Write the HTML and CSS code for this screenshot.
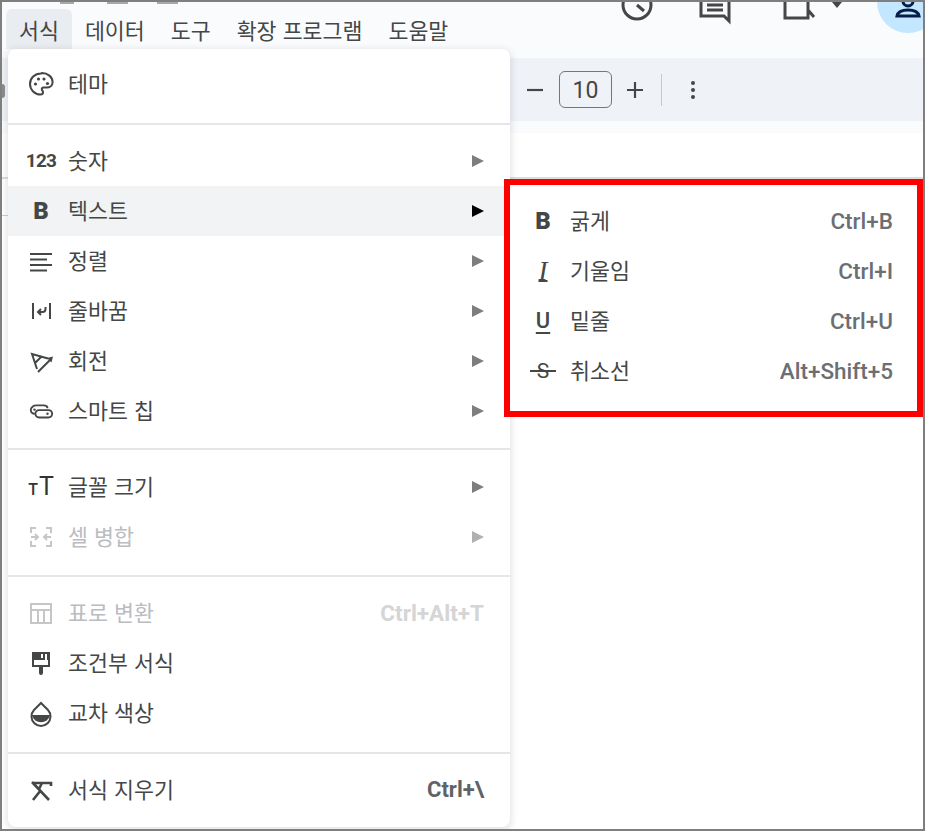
FILE: index.html
```html
<!DOCTYPE html>
<html lang="ko">
<head>
<meta charset="utf-8">
<title>서식 메뉴</title>
<link rel="stylesheet" href="styles.css">
</head>
<body>
<div class="frame">
  <header class="chrome">
    <div class="top-icons">
      <div class="crumbs"><i class="c1"></i><i class="c2"></i><i class="c3"></i></div>
      <svg class="ti ti-clock" viewBox="0 0 36 20"><circle cx="18" cy="3" r="14" /><path d="M18 3l7 6" /></svg>
      <svg class="ti ti-comment" viewBox="0 0 36 22"><path d="M4 0v14h23l5 5V0M10 3h16M10 8h16" /></svg>
      <svg class="ti ti-video" viewBox="0 0 36 20"><path d="M3 0v16h23V0M26 8l6 7" /></svg>
      <svg class="ti ti-chev" viewBox="0 0 12 8"><path class="fill" d="M1 0h10L6 6z" /></svg>
      <div class="avatar"><svg class="ti-person" viewBox="0 0 28 20"><circle cx="14" cy="-1" r="5" /><path d="M3 14c1-5 7-6 11-6s10 1 11 6z" /></svg></div>
    </div>
    <nav class="menubar">
      <span class="mb mb-on">서식</span>
      <span class="mb">데이터</span>
      <span class="mb">도구</span>
      <span class="mb">확장 프로그램</span>
      <span class="mb">도움말</span>
    </nav>
    <div class="toolbar">
      <svg class="tb-ic" viewBox="0 0 20 20"><path d="M2 10h16" /></svg>
      <div class="size">10</div>
      <svg class="tb-ic" viewBox="0 0 20 20"><path d="M2 10h16M10 2v16" /></svg>
      <i class="tb-div"></i>
      <svg class="tb-dots" viewBox="0 0 6 20"><circle cx="3" cy="3" r="2" /><circle cx="3" cy="10" r="2" /><circle cx="3" cy="17" r="2" /></svg>
    </div>
    <div class="strip"></div>
  </header>
  <div class="sheet">
    <div class="ruler"><i></i><i></i><i></i></div>
  </div>

  <i class="edge-blob"></i>
  <i class="edge-tick"></i>

  <div class="menu">
    <div class="item"><span class="ic"><svg viewBox="0 0 26 26"><path class="ln" d="M13 2.500C6.800 2.500 2 7.200 2 13s4.800 10.500 10.500 10.500c1.700 0 2.500-1 2.500-2.200 0-1.500-1.200-1.700-1.200-3 0-1 .8-1.700 1.800-1.700h3c3.600 0 6-2.400 6-5.600 0-5-5-9-10.600-9z"/><circle cx="7.500" cy="13" r="1.600"/><circle cx="10.500" cy="8" r="1.600"/><circle cx="16" cy="8" r="1.600"/><circle cx="19.500" cy="12.500" r="1.600"/></svg></span><span class="lb">테마</span></div>
    <hr class="sep sep-a">
    <div class="item"><span class="ic ic-t t123">123</span><span class="lb">숫자</span><b class="ar"></b></div>
    <div class="item on"><span class="ic ic-t tb">B</span><span class="lb">텍스트</span><b class="ar"></b></div>
    <div class="item"><span class="ic"><svg viewBox="0 0 26 26"><path class="ln" d="M2 6h22M2 11.500h17M2 17h22M2 22.500h17"/></svg></span><span class="lb">정렬</span><b class="ar"></b></div>
    <div class="item"><span class="ic"><svg viewBox="0 0 26 26"><path class="ln" d="M5 5v16M22 5v16M17.500 9v2c0 2-1 3-3 3H10M13 11l-3 3 3 3"/></svg></span><span class="lb">줄바꿈</span><b class="ar"></b></div>
    <div class="item"><span class="ic"><svg viewBox="0 0 26 26"><path class="ln" d="M20 10.500L4 6l5 15M7 15l7-7M10 24L22 12"/><path class="solid" d="M25 8.500l-1.500 6-4.500-4.500z"/></svg></span><span class="lb">회전</span><b class="ar"></b></div>
    <div class="item"><span class="ic"><svg viewBox="0 0 28 26"><path class="ln" d="M9 7h8c2.500 0 4 1.500 4 3M9 7c-3 0-6 2-6 5 0 2.500 2 4 4 4M12 12h10c2.500 0 4 2 4 4s-1.500 4-4 4H12c-2.500 0-4-2-4-4s1.500-4 4-4z"/><circle cx="7" cy="11.500" r="1.300"/><circle cx="21" cy="16" r="1.300"/></svg></span><span class="lb">스마트 칩</span><b class="ar"></b></div>
    <hr class="sep sep-b">
    <div class="item"><span class="ic ic-t ttt"><small>T</small>T</span><span class="lb">글꼴 크기</span><b class="ar"></b></div>
    <div class="item off"><span class="ic"><svg viewBox="0 0 26 26"><path class="ln" d="M8 4H3v5M18 4h5v5M8 22H3v-5M18 22h5v-5M3 13h7M7 10l3 3-3 3M23 13h-7M19 10l-3 3 3 3"/></svg></span><span class="lb">셀 병합</span><b class="ar"></b></div>
    <hr class="sep sep-c">
    <div class="item off"><span class="ic"><svg viewBox="0 0 26 26"><path class="ln" d="M3 4h20v19H3zM3 10h20M10 10v13M16 10v13"/></svg></span><span class="lb">표로 변환</span><span class="sc">Ctrl+Alt+T</span></div>
    <div class="item"><span class="ic"><svg viewBox="0 0 26 26"><path class="ln" d="M5 3h16v13H5z"/><path class="solid" d="M5 3h16v7H5zM11 16h4v7a2 2 0 0 1-4 0z"/><path class="cut" d="M14 4v4M18 4v6"/></svg></span><span class="lb">조건부 서식</span></div>
    <div class="item"><span class="ic"><svg viewBox="0 0 26 26"><path class="ln" d="M13 3l7 7a9.500 9.500 0 1 1-14 0z"/><path class="solid" d="M3.800 15h18.400A9.500 9.500 0 0 1 3.800 15z"/></svg></span><span class="lb">교차 색상</span></div>
    <hr class="sep sep-d">
    <div class="item"><span class="ic"><svg viewBox="0 0 26 26"><path class="ln thick" d="M6 6h17v3M14 6l-3 6M4 5l17 18M5 23l8-10"/></svg></span><span class="lb">서식 지우기</span><span class="sc sc-strong">Ctrl+\</span></div>
  </div>

  <div class="sub">
    <div class="sitem"><span class="sic tb">B</span><span class="lb">굵게</span><span class="sc">Ctrl+B</span></div>
    <div class="sitem"><span class="sic ti-i">I</span><span class="lb">기울임</span><span class="sc">Ctrl+I</span></div>
    <div class="sitem"><span class="sic ti-u">U</span><span class="lb">밑줄</span><span class="sc">Ctrl+U</span></div>
    <div class="sitem"><span class="sic ti-s">S</span><span class="lb">취소선</span><span class="sc">Alt+Shift+5</span></div>
  </div>
</div>
</body>
</html>
```

FILE: styles.css
```css
* { box-sizing: border-box; }
html, body { margin: 0; padding: 0; }
body {
  width: 925px;
  height: 831px;
  overflow: hidden;
  background: #fff;
  font-family: "Noto Sans CJK KR", "Roboto", sans-serif;
  color: #444746;
}
.frame {
  position: relative;
  width: 925px;
  height: 831px;
  border: 2px solid #7f7f7f;
  overflow: hidden;
  display: flex;
  flex-direction: column;
}
.chrome { background: #f9fbfd; height: 131px; flex: none; }
.top-icons {
  height: 7px;
  display: flex;
  align-items: flex-start;
}
.crumbs { width: 617px; flex: none; display: flex; }
.crumbs i { display: block; height: 2px; background: #a6a8aa; }
.crumbs .c1 { width: 14px; margin-left: 58px; }
.crumbs .c2 { width: 21px; margin-left: 33px; }
.crumbs .c3 { width: 21px; margin-left: 29px; }
.ti { flex: none; fill: none; stroke: #444746; stroke-width: 3; overflow: visible; }
.ti .fill { fill: #444746; stroke: none; }
.ti-clock { width: 36px; height: 20px; }
.ti-comment { width: 36px; height: 22px; margin-left: 42px; }
.ti-video { width: 36px; height: 20px; margin-left: 49px; }
.ti-chev { width: 12px; height: 8px; margin-left: 13px; }
.avatar {
  flex: none;
  width: 62px;
  height: 62px;
  margin: -31px 0 0 34px;
  border-radius: 50%;
  background: #c2e7ff;
  display: flex;
  justify-content: center;
  padding-top: 31px;
}
.ti-person { width: 28px; height: 20px; fill: none; stroke: #041e49; stroke-width: 3; overflow: visible; }

.menubar {
  height: 40px;
  padding-left: 4px;
  display: flex;
  font-size: 21.700px;
  line-height: 42px;
  color: #444746;
}
.mb { padding: 0 13px; white-space: nowrap; }
.mb-on { background: #e9ecf0; border-radius: 6px 6px 0 0; }

.toolbar {
  height: 63px;
  margin-top: 9px;
  background: #eff3f8;
  display: flex;
  align-items: center;
  padding-left: 523px;
}
.tb-ic { width: 20px; height: 20px; fill: none; stroke: #444746; stroke-width: 2.200; flex: none; }
.size {
  width: 53px;
  height: 37px;
  margin: 0 13px 0 14px;
  border: 1.500px solid #747775;
  border-radius: 6px;
  text-align: center;
  font: 400 23px/37px "Roboto", sans-serif;
  color: #444746;
}
.tb-div { width: 1px; height: 32px; background: #c7c7c7; margin-left: 16px; }
.tb-dots { width: 6px; height: 20px; margin-left: 28px; fill: #444746; flex: none; }
.strip { height: 12px; }

.sheet { flex: 1; background: #fff; }
.ruler {
  margin-top: 44px;
  height: 8px;
  border-top: 2px solid #dcdcdc;
  display: flex;
  padding-left: 516px;
  gap: 157px;
}
.ruler i { width: 1px; height: 6px; background: #d5d5d5; }

.edge-blob { position: absolute; left: 0; top: 82px; width: 3px; height: 14px; border-radius: 0 7px 7px 0; background: #8a8c8e; }
.edge-tick { position: absolute; left: 0; top: 213px; width: 6px; height: 1px; background: #cfcfcf; }

.menu {
  position: absolute;
  left: 6px;
  top: 47px;
  width: 502px;
  height: 778px;
  background: #fff;
  border-radius: 8px;
  box-shadow: 0 2px 6px 2px rgba(60,64,67,.13);
  padding-top: 10px;
}
.item {
  height: 50px;
  display: flex;
  align-items: center;
  padding: 0 26px 0 20px;
  font-size: 21.700px;
  color: #444746;
}
.item.on { background: #f1f3f4; }
.lb { flex: 1; white-space: nowrap; position: relative; top: -2px; }
.ic { width: 26px; height: 26px; margin-right: 14px; flex: none; display: flex; align-items: center; justify-content: center; }
.ic svg { width: 26px; height: 26px; fill: #444746; overflow: visible; }
.ln { fill: none; stroke: #444746; stroke-width: 2; }
.thick { stroke-width: 2.600; }
.solid { fill: #444746; }
.cut { fill: none; stroke: #fff; stroke-width: 2; }
.ic-t { font-family: "Roboto", sans-serif; color: #444746; line-height: 26px; }
.t123 { font-size: 19px; font-weight: 700; letter-spacing: -.8px; }
.tb { font-family: "Roboto", sans-serif; font-weight: 900; font-size: 24px; color: #444746; }
.ttt { font-size: 25px; font-weight: 400; align-items: baseline; color: #333; }
.ttt small { font-size: 16px; font-weight: 500; margin-right: 1px; }
.ar {
  width: 0; height: 0; flex: none;
  border-left: 12px solid #7e7e7e;
  border-top: 6px solid transparent;
  border-bottom: 6px solid transparent;
}
.on .ar { border-left-color: #000; }
.sc { font: 500 22.500px/26px "Roboto", sans-serif; color: #6b6f74; white-space: nowrap; }
.sc-strong { color: #5f6368; font-weight: 700; font-size: 22px; }
.off, .off .lb { color: #b9bcc0; }
.off .ln { stroke: #c4c7c5; }
.off .ar { border-left-color: #b0b0b0; }
.off .sc { color: #d5d5d5; font-weight: 700; }

.sep { margin: 0; border: 0; height: 2px; background: #e6e6e9; }
.sep-a { margin-top: 14px; margin-bottom: 11px; }
.sep-b { margin-top: 12px; margin-bottom: 12px; }
.sep-c { margin-top: 13px; margin-bottom: 11px; }
.sep-d { margin-top: 14px; margin-bottom: 11px; }

.sub {
  position: absolute;
  left: 502px;
  top: 177px;
  width: 419px;
  height: 238px;
  background: #fff;
  border: 6px solid #ff0000;
  padding-top: 11px;
}
.sitem {
  height: 50px;
  display: flex;
  align-items: center;
  padding: 0 24px 0 20px;
  font-size: 21.700px;
  color: #444746;
}
.sitem .sc { color: #6b6f74; }
.sic { width: 26px; margin-right: 14px; text-align: center; flex: none; line-height: 26px; }
.ti-i { font: italic 400 27px/26px "Liberation Serif", serif; text-decoration: underline 2px; text-decoration-skip-ink: none; text-underline-offset: 0; }
.ti-u { font: 500 22px/26px "Roboto", sans-serif; text-decoration: underline 2px; text-decoration-skip-ink: none; text-underline-offset: 4px; }
.ti-s { position: relative; font: 400 21px/26px "Roboto", sans-serif; }
.ti-s::after { content: ""; position: absolute; left: 0; right: 0; top: 12px; height: 2px; background: #444746; }
```
